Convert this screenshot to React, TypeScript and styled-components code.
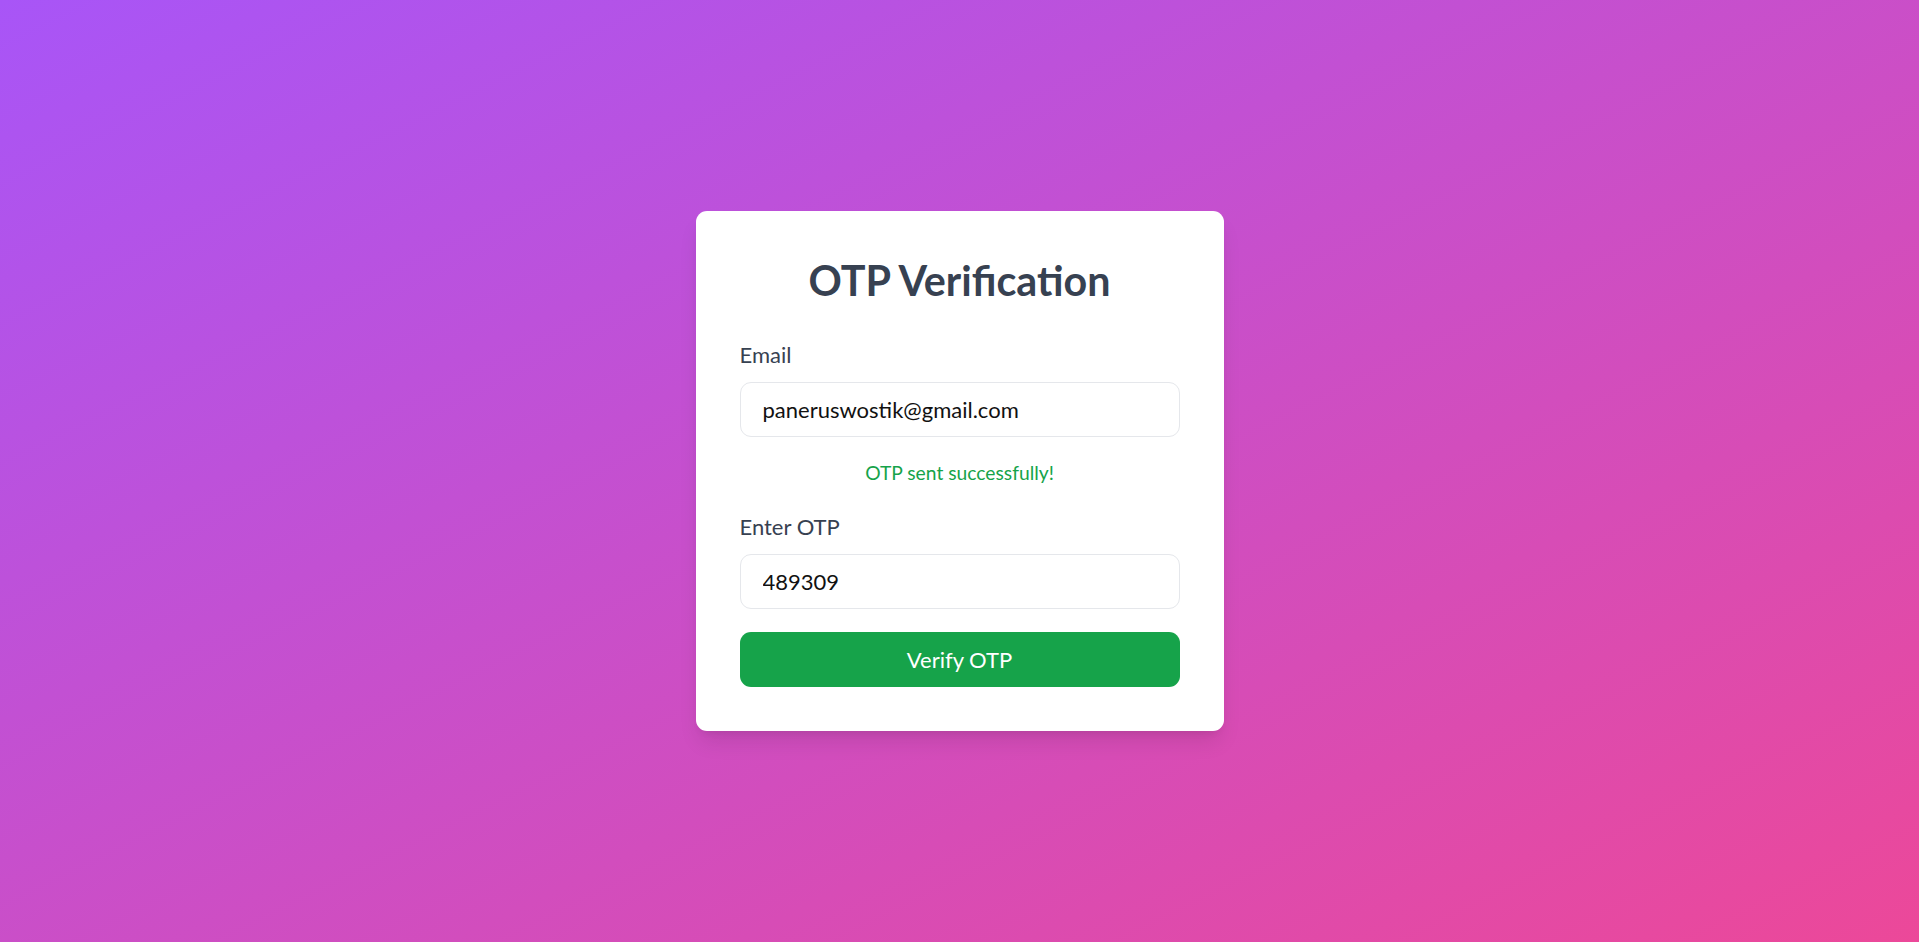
import React, { useState } from "react";
import styled, { createGlobalStyle } from "styled-components";

const GlobalStyle = createGlobalStyle`
  *, *::before, *::after { box-sizing: border-box; }
  html, body { margin: 0; padding: 0; }
  body {
    font-family: Lato, "Noto Sans", "Open Sans", sans-serif;
    -webkit-font-smoothing: antialiased;
  }
`;

const Page = styled.div`
  min-height: 100vh;
  display: flex;
  align-items: center;
  justify-content: center;
  background: linear-gradient(to bottom right, #a855f7, #ec4899);
`;

const Card = styled.div`
  width: 528px;
  background: #ffffff;
  border-radius: 11px;
  padding: 44px 44px 44px;
  box-shadow: 0 14px 21px -4px rgba(0, 0, 0, 0.1), 0 5px 8px -5px rgba(0, 0, 0, 0.1);
  display: flex;
  flex-direction: column;
`;

const Title = styled.h2`
  margin: 0 0 33px;
  text-align: center;
  font-size: 41.25px;
  line-height: 50px;
  font-weight: 700;
  color: #374151;
`;

const Field = styled.div`
  display: flex;
  flex-direction: column;
`;

const Label = styled.label`
  font-size: 22px;
  line-height: 33px;
  color: #374151;
  margin-bottom: 11px;
`;

const Input = styled.input`
  width: 100%;
  height: 55px;
  padding: 0 22px;
  border: 1px solid #e5e7eb;
  border-radius: 11px;
  font-family: inherit;
  font-size: 22px;
  color: #111;
  background: #fff;
  outline: none;
`;

const Message = styled.p`
  margin: 22px 0 24px;
  text-align: center;
  font-size: 19.25px;
  line-height: 27px;
  color: #16a34a;
`;

const Button = styled.button`
  margin-top: 23px;
  width: 100%;
  height: 55px;
  border: none;
  border-radius: 11px;
  background: #16a34a;
  color: #ffffff;
  font-family: inherit;
  font-size: 22px;
  cursor: pointer;
`;

export default function App() {
  const [email, setEmail] = useState("paneruswostik@gmail.com");
  const [otp, setOtp] = useState("489309");
  return (
    <>
      <GlobalStyle />
      <Page>
        <Card>
          <Title>OTP Verification</Title>
          <Field>
            <Label htmlFor="email">Email</Label>
            <Input id="email" type="email" value={email} onChange={(e) => setEmail(e.target.value)} />
          </Field>
          <Message>OTP sent successfully!</Message>
          <Field>
            <Label htmlFor="otp">Enter OTP</Label>
            <Input id="otp" type="text" value={otp} onChange={(e) => setOtp(e.target.value)} />
          </Field>
          <Button type="button">Verify OTP</Button>
        </Card>
      </Page>
    </>
  );
}
